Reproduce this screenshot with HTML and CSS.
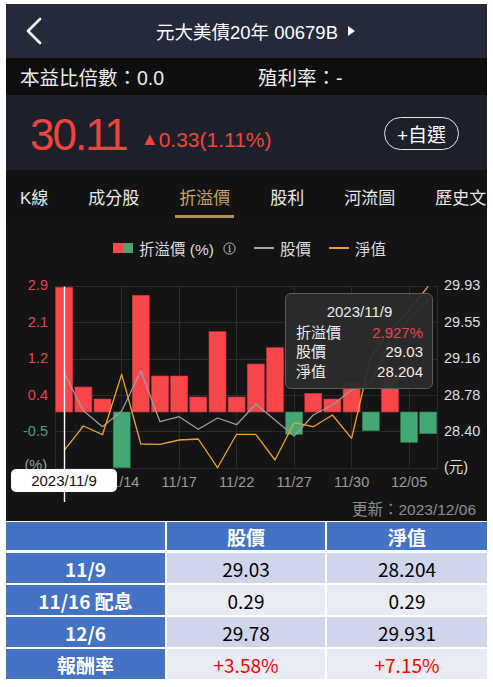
FILE: index.html
```html
<!DOCTYPE html>
<html lang="zh-Hant">
<head>
<meta charset="utf-8">
<title>元大美債20年 00679B</title>
<link rel="stylesheet" href="styles.css">
</head>
<body>
<div class="app">
  <header class="topbar">
    <svg class="back" width="20" height="28" viewBox="0 0 20 28"><polyline points="16,2 4,14 16,26" fill="none" stroke="#fff" stroke-width="2.6" stroke-linecap="round" stroke-linejoin="round"/></svg>
    <div class="title">元大美債20年 00679B<span class="tri"></span></div>
  </header>
  <div class="ratios">
    <span>本益比倍數：0.0</span>
    <span>殖利率：-</span>
  </div>
  <div class="quote">
    <div class="price">30.11</div>
    <div class="change"><span class="up">▲</span>0.33(1.11%)</div>
    <div class="fav">+自選</div>
  </div>
  <nav class="tabs">
    <span class="tab">K線</span>
    <span class="tab">成分股</span>
    <span class="tab active">折溢價</span>
    <span class="tab">股利</span>
    <span class="tab">河流圖</span>
    <span class="tab">歷史文</span>
  </nav>
  <section class="chart">
    <div class="legend">
      <span class="swatch"><i class="sw-red"></i><i class="sw-green"></i></span>
      <span class="lg-text">折溢價 (%)</span>
      <svg class="info" width="13" height="13" viewBox="0 0 13 13"><circle cx="6.5" cy="6.5" r="5.6" fill="none" stroke="#bbb" stroke-width="1"/><circle cx="6.5" cy="3.9" r="0.8" fill="#bbb"/><path d="M5.6 5.6h1.2v4M5.4 9.6h2.4" stroke="#bbb" stroke-width="1" fill="none"/></svg>
      <span class="ln ln-gray"></span>
      <span class="lg-text">股價</span>
      <span class="ln ln-orange"></span>
      <span class="lg-text">淨值</span>
    </div>
    <svg class="plot" width="481" height="234" viewBox="0 0 481 234">
      <g stroke="#2b2b2b" stroke-width="1">
        <line x1="49" y1="18.5" x2="432" y2="18.5"/>
        <line x1="49" y1="54.5" x2="432" y2="54.5"/>
        <line x1="49" y1="91.5" x2="432" y2="91.5"/>
        <line x1="49" y1="127.5" x2="432" y2="127.5"/>
        <line x1="49" y1="163.5" x2="432" y2="163.5"/>
        <line x1="49" y1="200.5" x2="432" y2="200.5"/>
        <line x1="49.5" y1="18" x2="49.5" y2="201"/>
        <line x1="115.5" y1="18" x2="115.5" y2="201"/>
        <line x1="173.5" y1="18" x2="173.5" y2="201"/>
        <line x1="230.5" y1="18" x2="230.5" y2="201"/>
        <line x1="288.5" y1="18" x2="288.5" y2="201"/>
        <line x1="345.5" y1="18" x2="345.5" y2="201"/>
        <line x1="403.5" y1="18" x2="403.5" y2="201"/>
        <line x1="431.5" y1="18" x2="431.5" y2="201"/>
      </g>
      <g fill="#fb474c" stroke="#c93338" stroke-width="0.6">
        <rect x="49.7" y="19.3" width="17" height="124.7"/>
        <rect x="68.9" y="119" width="17" height="25"/>
        <rect x="88" y="131" width="17" height="13"/>
        <rect x="126.3" y="27.3" width="17" height="116.7"/>
        <rect x="145.5" y="108" width="17" height="36"/>
        <rect x="164.7" y="108" width="17" height="36"/>
        <rect x="183.8" y="129" width="17" height="15"/>
        <rect x="203" y="63.7" width="17" height="80.3"/>
        <rect x="222.1" y="129" width="17" height="15"/>
        <rect x="241.3" y="96" width="17" height="48"/>
        <rect x="260.5" y="79.7" width="17" height="64.3"/>
        <rect x="298.8" y="125.3" width="17" height="18.7"/>
        <rect x="317.9" y="131" width="17" height="13"/>
        <rect x="337.1" y="115" width="17" height="29"/>
        <rect x="375.4" y="110" width="17" height="34"/>
      </g>
      <g fill="#44a874" stroke="#2f7d55" stroke-width="0.6">
        <rect x="107.2" y="144" width="17" height="55.7"/>
        <rect x="279.6" y="144" width="17" height="22.3"/>
        <rect x="356.3" y="144" width="17" height="18.7"/>
        <rect x="394.6" y="144" width="17" height="30.3"/>
        <rect x="413.7" y="144" width="17" height="21.7"/>
      </g>
      <polyline fill="none" stroke="#9c9c9c" stroke-width="1.3" stroke-linejoin="round" points="58.2,105.3 77.4,142.7 96.5,158.7 115.7,143 134.8,103 154,153.7 173.2,148.7 192.3,161.3 211.5,150 230.6,156.7 249.8,136 269,152 288.1,168 307.3,147 326.4,137 345.6,122 364.8,115 383.9,72 403.1,52 422.2,32.7"/>
      <polyline fill="none" stroke="#eea128" stroke-width="1.3" stroke-linejoin="round" points="58.2,182.3 77.4,158 96.5,166.7 115.7,106.3 134.8,176 154,176.3 173.2,172 192.3,171 211.5,199.7 230.6,166.3 249.8,166.3 269,192 288.1,154.7 307.3,158.7 326.4,147 345.6,170.3 364.8,89 383.9,62 403.1,42 422.2,18.3"/>
      <line x1="58.5" y1="18.5" x2="58.5" y2="234" stroke="#fff" stroke-width="1.4"/>
      <g class="ax-left" text-anchor="end">
        <text x="42" y="22" class="pos">2.9</text>
        <text x="42" y="59" class="pos">2.1</text>
        <text x="42" y="95" class="pos">1.2</text>
        <text x="42" y="132" class="pos">0.4</text>
        <text x="42" y="168" class="neg">-0.5</text>
        <text x="41" y="202" class="unit">(%)</text>
      </g>
      <g class="ax-right">
        <text x="438" y="22">29.93</text>
        <text x="438" y="59">29.55</text>
        <text x="438" y="95">29.16</text>
        <text x="438" y="132">28.78</text>
        <text x="438" y="168">28.40</text>
        <text x="438" y="204">(元)</text>
      </g>
      <g class="ax-bottom" text-anchor="middle">
        <text x="115.7" y="219">11/14</text>
        <text x="173.2" y="219">11/17</text>
        <text x="230.6" y="219">11/22</text>
        <text x="288.1" y="219">11/27</text>
        <text x="345.6" y="219">11/30</text>
        <text x="403.1" y="219">12/05</text>
      </g>
    </svg>
    <div class="updated">更新：2023/12/06</div>
    <div class="tooltip">
      <div class="tt-date">2023/11/9</div>
      <div class="tt-row"><span>折溢價</span><span class="tt-red">2.927%</span></div>
      <div class="tt-row"><span>股價</span><span>29.03</span></div>
      <div class="tt-row"><span>淨值</span><span>28.204</span></div>
    </div>
    <div class="datetag">2023/11/9</div>
  </section>
  <div class="table">
    <div class="th"></div><div class="th">股價</div><div class="th">淨值</div>
    <div class="rh">11/9</div><div class="td dark">29.03</div><div class="td dark">28.204</div>
    <div class="rh">11/16 配息</div><div class="td light">0.29</div><div class="td light">0.29</div>
    <div class="rh">12/6</div><div class="td dark">29.78</div><div class="td dark">29.931</div>
    <div class="rh">報酬率</div><div class="td light red">+3.58%</div><div class="td light red">+7.15%</div>
  </div>
</div>
</body>
</html>
```
FILE: styles.css
```css
html, body {
  background: #fff;
}
body {
  margin: 4px 6px 0 6px;
  font-family: "Liberation Sans", "Noto Sans CJK TC", sans-serif;
}
.app {
  width: 481px;
  display: flex;
  flex-direction: column;
}
.topbar {
  height: 54px;
  background: #232a39;
  position: relative;
  display: flex;
  align-items: center;
  justify-content: center;
  color: #fff;
}
.back {
  position: absolute;
  left: 18px;
  top: 13px;
}
.title {
  font-size: 18.5px;
  display: flex;
  align-items: center;
  margin-left: 18px;
}
.tri {
  display: inline-block;
  width: 0;
  height: 0;
  border-left: 7px solid #fff;
  border-top: 5px solid transparent;
  border-bottom: 5px solid transparent;
  margin-left: 10px;
}
.ratios {
  height: 37px;
  background: #0e0e0f;
  color: #ececec;
  font-size: 19.5px;
  display: grid;
  grid-template-columns: 238px 1fr;
  align-items: center;
  padding-left: 14px;
}
.quote {
  height: 75px;
  background: #1b202b;
  display: flex;
  align-items: center;
  padding-left: 24px;
  color: #f4433b;
}
.price {
  font-size: 44px;
  letter-spacing: -2px;
  line-height: 1;
  margin-top: 4px;
}
.change {
  font-size: 21px;
  margin-left: 14px;
  margin-top: 14px;
  display: flex;
  align-items: center;
}
.up {
  font-size: 18px;
  margin-right: 0;
}
.fav {
  margin-left: auto;
  margin-right: 28px;
  width: 73px;
  height: 31px;
  border: 1.5px solid #e4e4e4;
  border-radius: 17px;
  color: #fff;
  font-size: 19px;
  display: flex;
  align-items: center;
  justify-content: center;
  margin-top: 2px;
}
.tabs {
  height: 48px;
  background: #131313;
  display: flex;
  gap: 32px;
  padding-left: 10px;
  overflow: hidden;
  white-space: nowrap;
}
.tab {
  color: #e8e8e8;
  font-size: 17px;
  padding: 7px 4px 0 4px;
  display: flex;
  align-items: center;
  border-bottom: 3px solid transparent;
  flex-shrink: 0;
}
.tab.active {
  color: #c9a468;
  border-bottom-color: #b48e52;
}
.chart {
  position: relative;
  background: #141414;
  height: 303px;
  display: flex;
  flex-direction: column;
}
.legend {
  height: 50px;
  padding-top: 10px;
  box-sizing: border-box;
  display: flex;
  align-items: center;
  justify-content: center;
  color: #dcdcdc;
  font-size: 15.5px;
  padding-left: 6px;
}
.swatch {
  display: flex;
  width: 20px;
  height: 10px;
  margin-right: 6px;
}
.sw-red { flex: 1; background: #fb474c; }
.sw-green { flex: 1; background: #44a874; }
.info {
  margin-left: 9px;
  margin-right: 18px;
}
.ln {
  display: inline-block;
  width: 20px;
  height: 2px;
  margin-right: 6px;
}
.ln-gray { background: #a8a8a8; }
.ln-orange { background: #eea128; margin-left: 18px; }
.plot {
  display: block;
  font-size: 14.5px;
  font-family: "Liberation Sans", "Noto Sans CJK TC", sans-serif;
}
.ax-left .pos { fill: #e5464b; }
.ax-left .neg { fill: #3fa66f; }
.ax-left .unit { fill: #a0a0a0; }
.ax-right text { fill: #dedede; }
.ax-bottom text { fill: #9a9a9a; }
.updated {
  height: 19px;
  line-height: 16px;
  text-align: right;
  padding-right: 11px;
  color: #8e8e8e;
  font-size: 15.5px;
}
.tooltip {
  position: absolute;
  left: 279px;
  top: 75px;
  width: 148px;
  height: 96px;
  box-sizing: border-box;
  background: rgba(44, 44, 44, 0.94);
  border: 1px solid #5a5a5a;
  border-radius: 6px;
  padding: 8px 9px 0 10px;
  color: #ececec;
  font-size: 15px;
  line-height: 19.5px;
}
.tt-date {
  text-align: center;
  margin-bottom: 1px;
}
.tt-row {
  display: flex;
  justify-content: space-between;
}
.tt-red { color: #e5464b; }
.datetag {
  position: absolute;
  left: 5px;
  top: 251px;
  width: 106px;
  height: 23px;
  background: #fff;
  border-radius: 5px;
  color: #111;
  font-size: 15px;
  display: flex;
  align-items: center;
  justify-content: center;
}
.table {
  margin-top: 1px;
  display: grid;
  grid-template-columns: 159px 158px 160px;
  grid-template-rows: 29px 30px 30px 30px 30px;
  column-gap: 2px;
  row-gap: 2px;
  font-family: "Noto Sans CJK TC", sans-serif;
  font-size: 19px;
}
.table > div {
  display: flex;
  align-items: center;
  justify-content: center;
}
.th {
  background: #4472c4;
  color: #fff;
  font-weight: bold;
  margin-bottom: 1px;
}
.rh {
  background: #4472c4;
  color: #fff;
  font-weight: bold;
}
.td { color: #000; }
.dark { background: #cfd5ea; }
.light { background: #e9ebf5; }
.red { color: #ff0000; }
```
